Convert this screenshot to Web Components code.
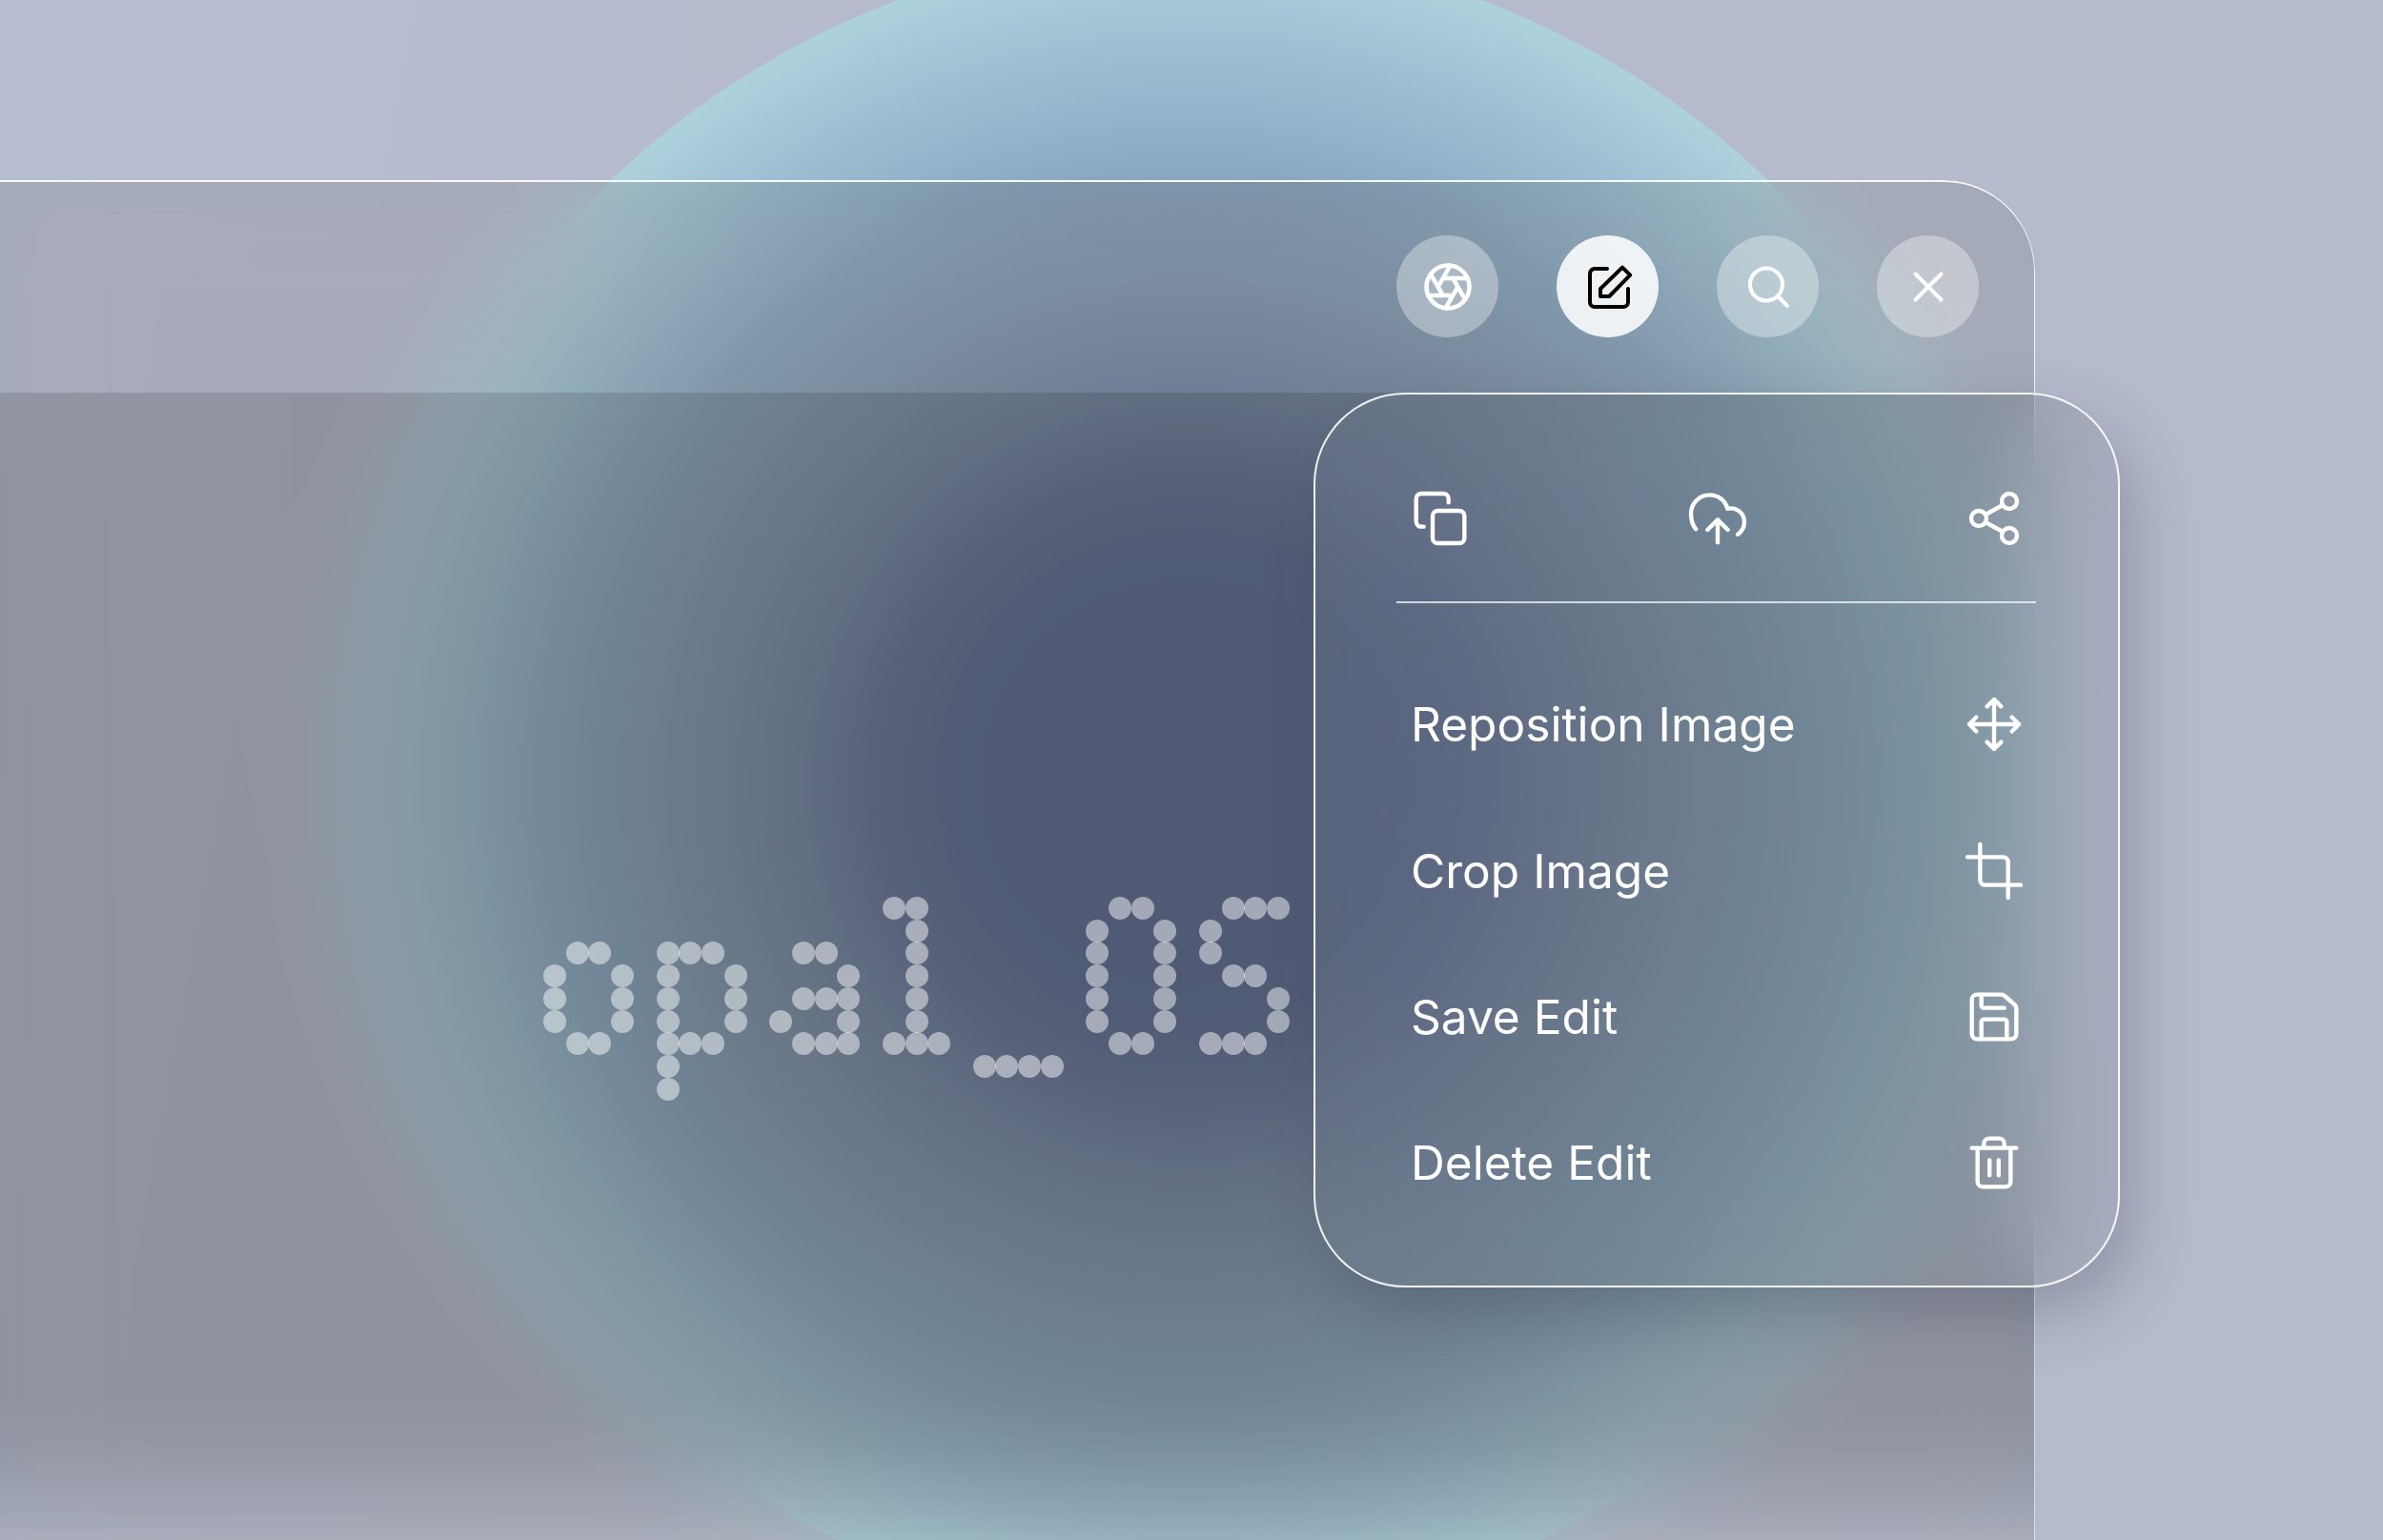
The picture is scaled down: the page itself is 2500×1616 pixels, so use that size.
<!DOCTYPE html>
<html lang="en">
<head>
<meta charset="utf-8">
<title>opal_05</title>
<style>
  html, body { margin: 0; height: 100%; background: #b5bbcd; }
  body { font-family: "Inter", "Liberation Sans", sans-serif; color: #fff; overflow: hidden; }
</style>
</head>
<body>
<glass-stage>
  <glass-panel>
    <icon-button slot="actions" icon="aperture"></icon-button>
    <icon-button slot="actions" icon="edit" active></icon-button>
    <icon-button slot="actions" icon="search"></icon-button>
    <icon-button slot="actions" icon="close"></icon-button>
    <dot-text>opal_05</dot-text>
  </glass-panel>
  <glass-menu slot="overlay">
    <ui-icon slot="tools" name="copy"></ui-icon>
    <ui-icon slot="tools" name="cloud"></ui-icon>
    <ui-icon slot="tools" name="share"></ui-icon>
    <menu-row icon="move">Reposition Image</menu-row>
    <menu-row icon="crop">Crop Image</menu-row>
    <menu-row icon="save">Save Edit</menu-row>
    <menu-row icon="trash">Delete Edit</menu-row>
  </glass-menu>
</glass-stage>

<script>
// All icons sit on a 24 unit grid
const ICONS = {
  aperture: `<g transform="translate(12 12) scale(1.125) translate(-12 -12)"><circle cx="12" cy="12" r="10"/><path d="m14.31 8 5.74 9.94M9.69 8h11.48M7.38 12l5.74-9.94M9.69 16 3.95 6.06M14.31 16H2.83M16.62 12l-5.74 9.94"/></g>`,
  edit: `<path d="M11.5 2.5H5A2.5 2.5 0 0 0 2.5 5v15A2.5 2.5 0 0 0 5 22.5h15a2.5 2.5 0 0 0 2.5-2.5v-7"/><path d="M8 13 19.5 1.8l4.1 4L12.6 17H8z"/>`,
  search: `<circle cx="11" cy="10.75" r="8.5"/><path d="m17.2 17 4.8 5"/>`,
  close: `<path d="M5.25 5.25l13.5 13.5M18.75 5.25 5.25 18.75"/>`,
  copy: `<rect x="9" y="9" width="12.5" height="12.75" rx="2"/><path d="M5.5 15.25h-1a2 2 0 0 1-2-2v-9a2 2 0 0 1 2-2h8.75a2 2 0 0 1 2 2v1.5"/>`,
  cloud: `<path d="M3.4 16.2C2.2 14.7 1.5 12.7 1.5 10.2 1.5 5.9 4.9 2.75 8.9 2.75c3.4 0 6.2 2.25 7 5.45.4-.1.8-.2 1.2-.2 3 0 5.4 2.4 5.4 5.4 0 2-1.1 3.8-2.6 4.9"/><path d="M12 21.5v-9M8 16.5l4-4 4 4"/>`,
  share: `<circle cx="18" cy="5.25" r="3"/><circle cx="6" cy="12" r="3"/><circle cx="18" cy="18.75" r="3"/><path d="m8.6 10.5 6.8-3.75M8.6 13.5l6.8 3.75"/>`,
  move: `<path d="M12 2.25v19.5M2.25 12h19.5M9.2 5 12 2.25 14.8 5M9.2 19 12 21.75 14.8 19M5 9.2 2.25 12 5 14.8M19 9.2 21.75 12 19 14.8"/>`,
  crop: `<path d="M6.5 1.5v14a2 2 0 0 0 2 2h14M1.5 6.5h14a2 2 0 0 1 2 2v14"/>`,
  save: `<path d="M3.25 5.25a2 2 0 0 1 2-2h9.6a2 2 0 0 1 1.3.5l4 3.5a2 2 0 0 1 .6 1.4v10.1a2 2 0 0 1-2 2H5.25a2 2 0 0 1-2-2z"/><path d="M7 3.25V7.5a1 1 0 0 0 1 1h8M7 20.75V14a1 1 0 0 1 1-1h8a1 1 0 0 1 1 1v6.75"/>`,
  trash: `<path d="M3.25 6.25h17.5M5.5 6.25V19.5a2 2 0 0 0 2 2h9a2 2 0 0 0 2-2V6.25M8 6.25V4.5a2 2 0 0 1 2-2h4a2 2 0 0 1 2 2v1.75M10.2 11v6M13.8 11v6"/>`
};

class UiIcon extends HTMLElement {
  connectedCallback() {
    const size = this.getAttribute('size') || 64;
    const stroke = this.getAttribute('stroke') || 1.65;
    this.attachShadow({ mode: 'open' }).innerHTML = `
      <style>
        :host { display: block; width: ${size}px; height: ${size}px; flex: none; }
        svg { display: block; width: 100%; height: 100%; overflow: visible; fill: none; stroke: currentColor;
              stroke-width: ${stroke}; stroke-linecap: round; stroke-linejoin: round; }
      </style>
      <svg viewBox="0 0 24 24" aria-hidden="true">${ICONS[this.getAttribute('name')] || ''}</svg>`;
  }
}
customElements.define('ui-icon', UiIcon);

class GlassStage extends HTMLElement {
  constructor() {
    super();
    this.attachShadow({ mode: 'open' }).innerHTML = `
      <style>
        :host { display: block; position: relative; width: 2500px; height: 1616px; overflow: hidden;
                background: linear-gradient(100deg, #b7bdd0 0%, #b5bbcd 45%, #b5bbcd 100%); }
        .orb { position: absolute; left: 372px; top: -55px; width: 1752px; height: 1752px; border-radius: 50%;
               background: radial-gradient(circle closest-side, #62719a 0%, #62719a 30%, #8395b0 55%, #88a5c0 72%, #90b0c8 78%, #a0c2d4 90%, #a9cdda 97%, #aed2dc 100%); }
        ::slotted([slot="overlay"]) { position: absolute; left: 1378px; top: 412px; }
      </style>
      <div class="orb"></div>
      <slot></slot>
      <slot name="overlay"></slot>`;
  }
}
customElements.define('glass-stage', GlassStage);

class GlassPanel extends HTMLElement {
  constructor() {
    super();
    this.attachShadow({ mode: 'open' }).innerHTML = `
      <style>
        :host { display: block; position: relative; margin: 189px 0 0 -100px; width: 2235px; height: 1527px; }
        .shell { position: relative; height: 100%; display: flex; flex-direction: column; border-radius: 96px;
                 background: rgba(20, 15, 5, .1);
                 -webkit-backdrop-filter: blur(46px) saturate(.88); backdrop-filter: blur(46px) saturate(.88); }
        .shell::after { content: ""; position: absolute; inset: 0; border-radius: inherit; padding: 2px 1.5px 0 0; pointer-events: none;
                 background: linear-gradient(180deg, rgba(255,255,255,.92) 0, rgba(255,255,255,.8) 45%, rgba(255,255,255,.6) 100%);
                 -webkit-mask: linear-gradient(#000 0 0) content-box, linear-gradient(#000 0 0);
                 -webkit-mask-composite: xor; mask-composite: exclude; }
        header { flex: none; height: 223px; display: flex; justify-content: flex-end; align-items: center; gap: 61px; padding-right: 59px; }
        main { flex: 1; padding: 529px 0 0 670px; border-radius: 0 0 96px 96px;
               background: linear-gradient(180deg, rgba(0,0,0,.13) 1060px, rgba(0,0,0,.11) 1108px, rgba(0,0,0,.05) 1158px, rgba(255,240,200,.04) 1204px); }
      </style>
      <div class="shell">
        <header><slot name="actions"></slot></header>
        <main><slot></slot></main>
      </div>`;
  }
}
customElements.define('glass-panel', GlassPanel);

class IconButton extends HTMLElement {
  connectedCallback() {
    const active = this.hasAttribute('active');
    this.attachShadow({ mode: 'open' }).innerHTML = `
      <style>
        :host { display: flex; align-items: center; justify-content: center; width: 107px; height: 107px; flex: none;
                border-radius: 50%; cursor: pointer; color: ${active ? '#000' : '#fff'};
                background: rgba(255, 255, 255, ${active ? .86 : .34}); }
      </style>
      <ui-icon name="${this.getAttribute('icon')}" size="48" stroke="2"></ui-icon>`;
  }
}
customElements.define('icon-button', IconButton);

// dot font: [row, column], rows run from ascender (0) to descender (8); adv = columns taken
const DOT_FONT = {
  o: { adv: 5, dots: [[2,1],[2,2],[3,0],[3,3],[4,0],[4,3],[5,0],[5,3],[6,1],[6,2]] },
  p: { adv: 5, dots: [[2,0],[2,1],[2,2],[3,0],[3,3],[4,0],[4,3],[5,0],[5,3],[6,0],[6,1],[6,2],[7,0],[8,0]] },
  a: { adv: 5, dots: [[2,1],[2,2],[3,3],[4,1],[4,2],[4,3],[5,0],[5,3],[6,1],[6,2],[6,3]] },
  l: { adv: 4, dots: [[0,0],[0,1],[1,1],[2,1],[3,1],[4,1],[5,1],[6,0],[6,1],[6,2]] },
  _: { adv: 5, dots: [[7,0],[7,1],[7,2],[7,3]] },
  0: { adv: 5, dots: [[0,1],[0,2],[1,0],[1,3],[2,0],[2,3],[3,0],[3,3],[4,0],[4,3],[5,0],[5,3],[6,1],[6,2]] },
  5: { adv: 4, dots: [[0,1],[0,2],[0,3],[1,0],[2,0],[3,1],[3,2],[4,3],[5,3],[6,0],[6,1],[6,2]] }
};

class DotText extends HTMLElement {
  connectedCallback() {
    const text = this.textContent.trim();
    let dots = '';
    let start = 0;
    for (const ch of text) {
      const glyph = DOT_FONT[ch];
      if (!glyph) continue;
      glyph.dots.forEach(([row, col]) => {
        dots += `<i style="grid-row:${row + 1};grid-column:${start + col + 1}"></i>`;
      });
      start += glyph.adv;
    }
    this.attachShadow({ mode: 'open' }).innerHTML = `
      <style>
        :host { display: block; position: relative; width: max-content; }
        .dots { display: grid; grid-template-columns: repeat(${start}, 23.73px); grid-template-rows: repeat(9, 23.73px); }
        i { display: block; width: 24px; height: 24px; border-radius: 50%; background: rgba(255, 255, 255, .48); }
        /* the string itself, over the dots */
        .label { position: absolute; inset: 0; color: transparent; white-space: pre;
                 font: 186px/213px "Liberation Mono", monospace; }
      </style>
      <div class="dots" aria-hidden="true">${dots}</div>
      <div class="label"><slot></slot></div>`;
  }
}
customElements.define('dot-text', DotText);

class GlassMenu extends HTMLElement {
  constructor() {
    super();
    this.attachShadow({ mode: 'open' }).innerHTML = `
      <style>
        :host { display: block; width: 846px; height: 939px; box-sizing: border-box; padding: 98px 86px 0 85px;
                border: 2px solid rgba(255, 255, 255, .9); border-radius: 96px;
                background: rgba(125, 133, 140, .26);
                -webkit-backdrop-filter: blur(50px) saturate(1.25); backdrop-filter: blur(50px) saturate(1.25);
                box-shadow: 16px 28px 64px rgba(50, 55, 75, .28); }
        .tools { display: flex; justify-content: space-between; padding: 0 12px 55px 14px; border-bottom: 2px solid rgba(255, 255, 255, .72); }
        .rows { display: flex; flex-direction: column; margin-top: 50.5px; }
      </style>
      <div class="tools"><slot name="tools"></slot></div>
      <div class="rows"><slot></slot></div>`;
  }
}
customElements.define('glass-menu', GlassMenu);

class MenuRow extends HTMLElement {
  connectedCallback() {
    this.attachShadow({ mode: 'open' }).innerHTML = `
      <style>
        :host { display: flex; align-items: center; justify-content: space-between; height: 153.4px;
                padding: 0 12px 0 15px; font-size: 49.6px; font-weight: 400; cursor: pointer; }
      </style>
      <span><slot></slot></span>
      <ui-icon name="${this.getAttribute('icon')}"></ui-icon>`;
  }
}
customElements.define('menu-row', MenuRow);
</script>
</body>
</html>
